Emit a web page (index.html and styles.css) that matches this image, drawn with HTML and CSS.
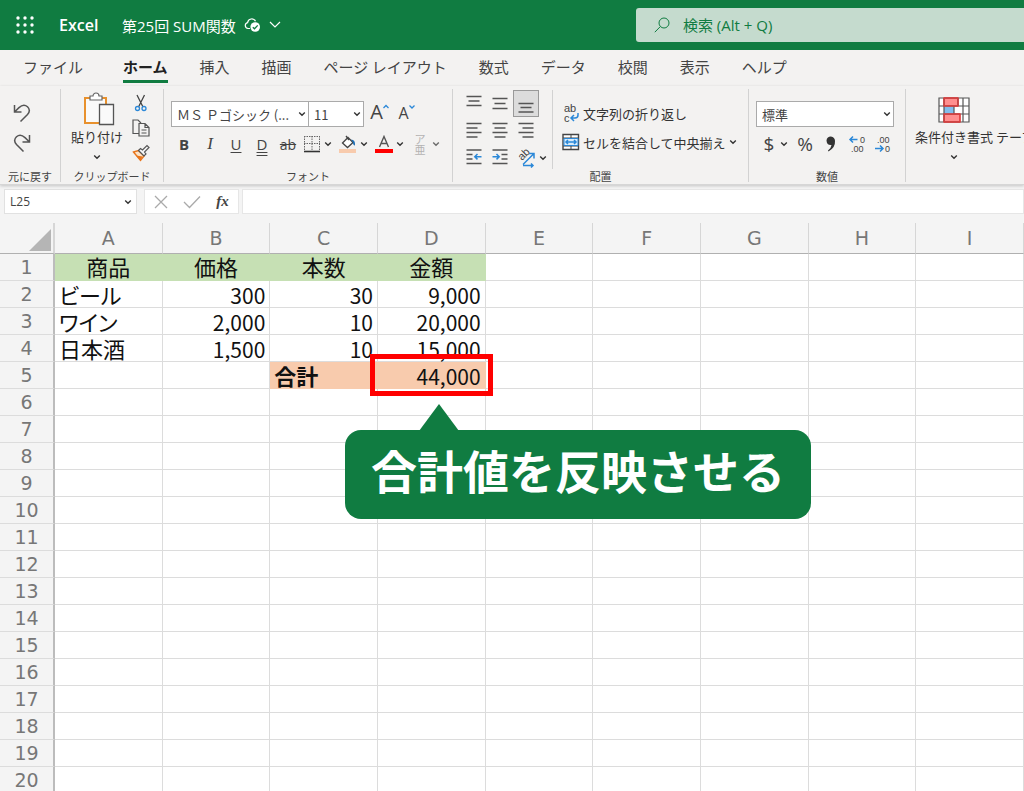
FILE: index.html
```html
<!DOCTYPE html>
<html lang="ja">
<head>
<meta charset="utf-8">
<title>第25回 SUM関数 - Excel</title>
<link rel="stylesheet" href="styles.css">
</head>
<body>
<svg class="defs" aria-hidden="true">
  <symbol id="chev" viewBox="0 0 8 8"><path d="M1.2 2.5 4 5.3 6.8 2.5" fill="none" stroke="#333" stroke-width="1.4"/></symbol>
</svg>
<header class="titlebar">
  <button class="launcher" aria-label="アプリ起動ツール">
    <svg width="18" height="18" viewBox="0 0 18 18" fill="#fff"><circle cx="2" cy="2" r="1.7"/><circle cx="9" cy="2" r="1.7"/><circle cx="16" cy="2" r="1.7"/><circle cx="2" cy="9" r="1.7"/><circle cx="9" cy="9" r="1.7"/><circle cx="16" cy="9" r="1.7"/><circle cx="2" cy="16" r="1.7"/><circle cx="9" cy="16" r="1.7"/><circle cx="16" cy="16" r="1.7"/></svg>
  </button>
  <a class="brand" href="#">Excel</a>
  <button class="doc">
    <span>第25回 SUM関数</span>
    <svg width="17" height="16" viewBox="0 0 17 16"><path d="M6 11.5H4A3 3 0 0 1 3.6 5.6 4.2 4.2 0 0 1 11.5 4.2" fill="none" stroke="#fff" stroke-width="1.2"/><circle cx="11.2" cy="10" r="4.8" fill="#fff"/><path d="m8.8 10.2 1.7 1.6 3.2-3.4" fill="none" stroke="#107c41" stroke-width="1.3"/></svg>
    <svg width="12" height="8" viewBox="0 0 12 8"><path d="m1 1 5 5 5-5" fill="none" stroke="#fff" stroke-width="1.2"/></svg>
  </button>
  <div class="search">
    <svg width="16" height="16" viewBox="0 0 16 16" fill="none" stroke="#107c41"><circle cx="10" cy="6" r="5"/><path d="M6.3 9.6.8 15.2"/></svg>
    <input type="text" placeholder="検索 (Alt + Q)" aria-label="検索">
  </div>
</header>
<nav class="tabs">
  <button class="tab file">ファイル</button>
  <button class="tab active">ホーム</button>
  <button class="tab">挿入</button>
  <button class="tab">描画</button>
  <button class="tab">ページ レイアウト</button>
  <button class="tab">数式</button>
  <button class="tab">データ</button>
  <button class="tab">校閲</button>
  <button class="tab">表示</button>
  <button class="tab">ヘルプ</button>
</nav>
<section class="ribbon">
  <div class="group g-undo">
    <div class="body stack">
      <button aria-label="元に戻す"><svg width="18" height="20" viewBox="0 0 18 20" fill="none" stroke="#555" stroke-width="1.5"><path d="M1.5 2v7h7M2 8.5 6 4.6C9 1.800 12 1.500 14.500 3.800 17 6.300 16.800 9 14.500 11.500L7.500 18.500"/></svg></button>
      <button aria-label="やり直し"><svg width="18" height="20" viewBox="0 0 18 20" fill="none" stroke="#555" stroke-width="1.5"><path d="M16.500 2v7h-7M16 8.500 12 4.600C9 1.800 6 1.500 3.500 3.800 1 6.300 1.200 9 3.500 11.500L10.500 18.500"/></svg></button>
    </div>
    <div class="label">元に戻す</div>
  </div>
  <div class="group g-clip">
    <div class="body clip">
      <button class="big">
        <svg class="board" width="32" height="34" viewBox="0 0 32 34"><path d="M2 6h21v25H2z" fill="#fafafa" stroke="#e8912d" stroke-width="2"/><path d="M7 8V4h3a3 3 0 0 1 6 0h3v4z" fill="#fff" stroke="#666" stroke-width="1.200"/><path d="M16.500 12.500h14v20h-14z" fill="#fafafa" stroke="#555" stroke-width="1.300"/></svg>
        <span>貼り付け</span>
        <svg class="chev"><use href="#chev"/></svg>
      </button>
      <div class="minis">
        <button aria-label="切り取り"><svg width="18" height="18" viewBox="0 0 18 18" fill="none"><path d="m5 1 6 12M12.500 1l-6 12" stroke="#444" stroke-width="1.300"/><circle cx="5.500" cy="14.500" r="2" stroke="#2b88d8" stroke-width="1.300"/><circle cx="12" cy="14.500" r="2" stroke="#2b88d8" stroke-width="1.300"/></svg></button>
        <button aria-label="コピー"><svg width="18" height="18" viewBox="0 0 18 18" fill="none" stroke="#555" stroke-width="1.200"><path d="M7 14.500H1V1h5l3 3"/><path d="M7 4.500h6l4 4V17H7zM13 4.500v4h4M9.500 11h5M9.500 14h5"/></svg></button>
        <button aria-label="書式のコピー"><svg width="18" height="18" viewBox="0 0 18 18"><path d="M1.500 8 6.500 6.500l5.500 5.500-3.500 4.500z" fill="#fbe3c8" stroke="#e8761d" stroke-width="1.400"/><path d="m4 11.500 6.500 1-2 4z" fill="#e8761d"/><path d="m6.500 6.500 2-2 2 1.500 4.500-4.500 2 2-4.500 4.500 1.500 2-2 2z" fill="#f6f6f6" stroke="#555" stroke-width="1.200"/></svg></button>
      </div>
    </div>
    <div class="label">クリップボード</div>
  </div>
  <div class="group g-font">
    <div class="body rows">
      <div class="line">
        <span class="combo name"><select aria-label="フォント"><option>ＭＳ Ｐゴシック (...</option></select><svg class="chev"><use href="#chev"/></svg></span>
        <span class="combo size"><select aria-label="フォント サイズ"><option>11</option></select><svg class="chev"><use href="#chev"/></svg></span>
        <button class="grow" aria-label="フォント サイズの拡大"><span class="a-big">A</span><svg width="6" height="16" viewBox="0 0 6 16"><path d="M.5 4 3 1.500 5.500 4" fill="none" stroke="#2b88d8" stroke-width="1.300"/></svg></button>
        <button class="grow" aria-label="フォント サイズの縮小"><span class="a-small">A</span><svg width="6" height="16" viewBox="0 0 6 16"><path d="M.5 1.500 3 4l2.500-2.500" fill="none" stroke="#2b88d8" stroke-width="1.300"/></svg></button>
      </div>
      <div class="line">
        <button class="t bold">B</button><button class="t ital">I</button><button class="t und">U</button><button class="t dbl">D</button><button class="t strike">ab</button>
        <button class="split" aria-label="罫線"><svg width="18" height="18" viewBox="0 0 18 18"><path d="M1.500 1v15M16.500 1v15M1 1.500h16M9 1v15M1 8.500h16" stroke="#666" stroke-dasharray="1.500 1"/><path d="M1 16.500h16" stroke="#333" stroke-width="1.600"/></svg><svg class="chev"><use href="#chev"/></svg></button>
        <button class="split" aria-label="塗りつぶしの色"><svg width="18" height="18" viewBox="0 0 18 18"><path d="M3.500 8 9 2.500 14 7.500 8.500 12.500zM7 1l3 4" fill="#fff" stroke="#444" stroke-width="1.300"/><path d="M12 4.500q4.500 0 4 6-2 0-2-3z" fill="#1f6fb5"/><path d="M0 14h17v4H0z" fill="#f8cbad"/></svg><svg class="chev"><use href="#chev"/></svg></button>
        <button class="split" aria-label="フォントの色"><svg width="18" height="18" viewBox="0 0 18 18"><path d="M4.500 12 9 1.500 13.500 12M6 8.500h6" fill="none" stroke="#555" stroke-width="1.400"/><path d="M0 14h18v4H0z" fill="red"/></svg><svg class="chev"><use href="#chev"/></svg></button>
        <button class="split off" aria-label="ふりがな"><span class="ruby"><span>ア</span><span>亜</span></span><svg class="chev"><use href="#chev"/></svg></button>
      </div>
    </div>
    <div class="label">フォント</div>
  </div>
  <div class="group g-align">
    <div class="body align">
      <div class="agrid">
        <button aria-label="上揃え"><svg width="16" height="18" viewBox="0 0 16 18"><path d="M.5 1.500h15M2.500 6h11M.5 10.500h15"/></svg></button>
        <button aria-label="上下中央揃え"><svg width="16" height="18" viewBox="0 0 16 18"><path d="M.5 3.500h15M2.500 8.500h11M.5 13.500h15"/></svg></button>
        <button class="on" aria-label="下揃え"><svg width="16" height="18" viewBox="0 0 16 18"><path d="M.5 8.500h15M2.500 12.500h11M.5 17h15"/></svg></button>
        <button aria-label="左揃え"><svg width="16" height="18" viewBox="0 0 16 18"><path d="M.5 1.500h15M.5 6h11M.5 10.500h15M.5 15h11"/></svg></button>
        <button aria-label="中央揃え"><svg width="16" height="18" viewBox="0 0 16 18"><path d="M.5 1.500h15M2.500 6h11M.5 10.500h15M2.500 15h11"/></svg></button>
        <button aria-label="右揃え"><svg width="16" height="18" viewBox="0 0 16 18"><path d="M.5 1.500h15M4.500 6h11M.5 10.500h15M4.500 15h11"/></svg></button>
        <button aria-label="インデントを減らす"><svg width="16" height="18" viewBox="0 0 16 18"><path d="M.5 1h15M.5 5.500h6M.5 10h6M.5 14.500h15"/><path class="blue" d="M15.500 7.700H9M11.500 5 8.800 7.700l2.700 2.700"/></svg></button>
        <button aria-label="インデントを増やす"><svg width="16" height="18" viewBox="0 0 16 18"><path d="M.5 1h15M9.500 5.500h6M9.500 10h6M.5 14.500h15"/><path class="blue" d="M.5 7.700H7M4.500 5l2.700 2.700-2.700 2.700"/></svg></button>
        <button class="orient" aria-label="方向"><svg width="18" height="20" viewBox="0 0 18 20"><text x="0" y="0" class="abtext" transform="translate(5 13) rotate(-45)">ab</text><path class="blue" d="M6 16.500 16.500 6M12 5.500h5v5M6 17.500h10M14 15.500l2 2-2 2"/></svg><svg class="chev"><use href="#chev"/></svg></button>
      </div>
      <div class="wraps">
        <button><svg width="18" height="20" viewBox="0 0 18 20"><text x="2" y="9" class="abtext">ab</text><text x="2" y="19" class="abtext">c</text><path class="blue" d="M16 10v2q0 3-3 3H9M12 12l-3 3 3 3"/></svg><span>文字列の折り返し</span></button>
        <button><svg width="18" height="18" viewBox="0 0 18 18"><path d="M1 1.500h15.500v15H1z" fill="#fff" stroke="#444" stroke-width="1.400"/><path d="M1 5h15.500M1 13h15.500M9 1.500V5M9 13v3.500" stroke="#444"/><path d="M2 5.500h14v7H2z" fill="#d9ecfa" stroke="#2b88d8"/><path class="blue" d="M4 9h10M6 7 4 9l2 2M12 7l2 2-2 2"/></svg><span>セルを結合して中央揃え</span><svg class="chev"><use href="#chev"/></svg></button>
      </div>
    </div>
    <div class="label">配置</div>
  </div>
  <div class="group g-num">
    <div class="body rows">
      <div class="line"><span class="combo fmt"><select aria-label="表示形式"><option>標準</option></select><svg class="chev"><use href="#chev"/></svg></span></div>
      <div class="line nums">
        <button class="cur">$<svg class="chev"><use href="#chev"/></svg></button>
        <button class="n">%</button>
        <button class="n" aria-label="桁区切りスタイル"><svg width="10" height="16" viewBox="0 0 10 16"><path d="M.5 4.500A4.200 4.200 0 0 1 9 5Q9.500 11.500 2.500 15.500L2 14.500Q5.300 12 5.500 9 .8 9.500.5 4.500z" fill="#333"/></svg></button>
        <button class="n" aria-label="小数点以下の表示桁数を増やす"><svg width="18" height="20" viewBox="0 0 18 20"><text x="12" y="9" class="dec">0</text><text x="3" y="18" class="dec">.00</text><path class="blue" d="M9.500 5.500H2M5 2.500l-3 3 3 3"/></svg></button>
        <button class="n" aria-label="小数点以下の表示桁数を減らす"><svg width="18" height="20" viewBox="0 0 18 20"><text x="3" y="9" class="dec">.00</text><text x="11" y="18" class="dec">0</text><path class="blue" d="M1 14.500h8M6 11.500l3 3-3 3"/></svg></button>
      </div>
    </div>
    <div class="label">数値</div>
  </div>
  <div class="group g-style">
    <div class="body styles">
      <button class="big">
        <svg width="32" height="26" viewBox="0 0 32 26"><path d="M1 1h30v24H1z" fill="#fff"/><path d="M6 1h14v8H6zM6 17h16v8H6z" fill="#ff8f8f" stroke="#e03c3c"/><path d="M6 9h10v8H6z" fill="#83beec"/><path d="M1 1h30v24H1zM6 1v24M25 1v24M1 9h30M1 17h30M20 1v8M16 9v8" fill="none" stroke="#555" stroke-width="1.200"/><path d="M6 1h14v8H6zM6 17h16v8H6z" fill="none" stroke="#e03c3c" stroke-width="1.300"/></svg>
        <span>条件付き書式</span>
        <svg class="chev"><use href="#chev"/></svg>
      </button>
      <button class="big tbl"><span>テーブルとして</span></button>
    </div>
  </div>
</section>
<section class="formula">
  <span class="combo cellname"><input type="text" value="L25" aria-label="名前ボックス"><svg class="chev"><use href="#chev"/></svg></span>
  <div class="fx">
    <button aria-label="キャンセル"><svg width="14" height="14" viewBox="0 0 14 14"><path d="m1 1 12 12M13 1 1 13" stroke="#aaa" stroke-width="1.300"/></svg></button>
    <button aria-label="入力"><svg width="18" height="14" viewBox="0 0 18 14"><path d="m1 7 5.500 5.500L17 1.500" fill="none" stroke="#aaa" stroke-width="1.300"/></svg></button>
    <button class="fn"><i>fx</i></button>
  </div>
  <input class="fin" type="text" aria-label="数式バー">
</section>
<main class="sheet">
<table>
<thead><tr><th class="corner" aria-label="すべて選択"><svg width="22" height="22" viewBox="0 0 22 22"><path d="M22 0v22H0z" fill="#b5b5b5"/></svg></th><th>A</th><th>B</th><th>C</th><th>D</th><th>E</th><th>F</th><th>G</th><th>H</th><th>I</th></tr></thead>
<tbody>
<tr><th>1</th><td class="head">商品</td><td class="head">価格</td><td class="head">本数</td><td class="head">金額</td><td></td><td></td><td></td><td></td><td></td></tr>
<tr><th>2</th><td>ビール</td><td class="num">300</td><td class="num">30</td><td class="num">9,000</td><td></td><td></td><td></td><td></td><td></td></tr>
<tr><th>3</th><td>ワイン</td><td class="num">2,000</td><td class="num">10</td><td class="num">20,000</td><td></td><td></td><td></td><td></td><td></td></tr>
<tr><th>4</th><td>日本酒</td><td class="num">1,500</td><td class="num">10</td><td class="num">15,000</td><td></td><td></td><td></td><td></td><td></td></tr>
<tr><th>5</th><td></td><td></td><td class="sum">合計</td><td class="num sum total">44,000<div class="mark"></div><div class="callout">合計値を反映させる</div></td><td></td><td></td><td></td><td></td><td></td></tr>
<tr><th>6</th><td></td><td></td><td></td><td></td><td></td><td></td><td></td><td></td><td></td></tr>
<tr><th>7</th><td></td><td></td><td></td><td></td><td></td><td></td><td></td><td></td><td></td></tr>
<tr><th>8</th><td></td><td></td><td></td><td></td><td></td><td></td><td></td><td></td><td></td></tr>
<tr><th>9</th><td></td><td></td><td></td><td></td><td></td><td></td><td></td><td></td><td></td></tr>
<tr><th>10</th><td></td><td></td><td></td><td></td><td></td><td></td><td></td><td></td><td></td></tr>
<tr><th>11</th><td></td><td></td><td></td><td></td><td></td><td></td><td></td><td></td><td></td></tr>
<tr><th>12</th><td></td><td></td><td></td><td></td><td></td><td></td><td></td><td></td><td></td></tr>
<tr><th>13</th><td></td><td></td><td></td><td></td><td></td><td></td><td></td><td></td><td></td></tr>
<tr><th>14</th><td></td><td></td><td></td><td></td><td></td><td></td><td></td><td></td><td></td></tr>
<tr><th>15</th><td></td><td></td><td></td><td></td><td></td><td></td><td></td><td></td><td></td></tr>
<tr><th>16</th><td></td><td></td><td></td><td></td><td></td><td></td><td></td><td></td><td></td></tr>
<tr><th>17</th><td></td><td></td><td></td><td></td><td></td><td></td><td></td><td></td><td></td></tr>
<tr><th>18</th><td></td><td></td><td></td><td></td><td></td><td></td><td></td><td></td><td></td></tr>
<tr><th>19</th><td></td><td></td><td></td><td></td><td></td><td></td><td></td><td></td><td></td></tr>
<tr><th>20</th><td></td><td></td><td></td><td></td><td></td><td></td><td></td><td></td><td></td></tr>
</tbody>
</table>
</main>
</body>
</html>
```
FILE: styles.css
```css
* { box-sizing: border-box; }
body {
  margin: 0; height: 100vh; overflow: hidden; display: flex; flex-direction: column;
  font-family: "Noto Sans CJK JP", sans-serif; font-size: 13px; color: #444; background: #f4f4f4;
}
button, input, select { font: inherit; color: inherit; margin: 0; padding: 0; border: 0; background: none; }
button { display: flex; align-items: center; justify-content: center; white-space: nowrap; }
svg { flex: none; display: block; }
.defs { position: absolute; width: 0; height: 0; }
.chev { width: 8px; height: 8px; }

.titlebar { flex: none; height: 50px; display: flex; align-items: center; background: #107c41; color: #fff; font-family: "Open Sans", "Noto Sans CJK JP", sans-serif; padding-left: 16px; }
.brand { margin-left: 25px; color: #fff; text-decoration: none; font-size: 16px; font-weight: 600; width: 63px; }
.doc { font-size: 15px; gap: 8px; }
.search { margin-left: auto; width: 38.5%; height: 34px; display: flex; align-items: center; gap: 13px; padding-left: 18px; background: #c5dbce; border-radius: 3px 0 0 3px; }
.search input { flex: 1; min-width: 0; font-size: 15px; outline: 0; }
.search input::placeholder { color: #107c41; opacity: 1; }

.tabs { flex: none; height: 36px; display: flex; background: #f3f2f1; padding-left: 7px; font-size: 15px; }
.tab { padding: 0 16px 4px; position: relative; color: #444; }
.file { margin-right: 8px; }
.active { font-weight: 700; color: #222; }
.active::after { content: ""; position: absolute; left: 16px; right: 16px; bottom: 3px; height: 3px; background: #107c41; }

.ribbon { flex: none; height: 99px; display: flex; background: #f3f2f1; padding-top: 3px; border-bottom: 1px solid #d6d6d6; box-shadow: 0 1px 3px #0003; position: relative; overflow: hidden; }
.group { flex: none; display: flex; flex-direction: column; border-right: 1px solid #d2d2d2; margin-bottom: 2px; }
.body { flex: 1; display: flex; min-height: 0; }
.label { height: 15px; line-height: 15px; font-size: 11px; text-align: center; white-space: nowrap; margin-bottom: -2px; }
.g-undo { width: 61px; }
.g-clip { width: 103px; }
.g-font { width: 289px; }
.g-align { width: 296px; }
.g-num { width: 157px; }
.g-style { flex: 1; border: 0; min-width: 0; overflow: hidden; }
.stack { flex-direction: column; gap: 10px; padding: 14px 0 0 13px; align-items: flex-start; }
.clip { padding-left: 10px; gap: 9px; }
.big { flex-direction: column; justify-content: flex-start; gap: 0; padding-top: 3px; color: #333; }
.big .board { margin-left: 4px; }
.big span { line-height: 20px; margin: 1px 0 6px; }
.minis { display: flex; flex-direction: column; gap: 7px; padding-top: 5px; }
.rows { flex-direction: column; gap: 4px; padding: 12px 0 0 7px; }
.line { display: flex; height: 26px; align-items: center; }
.combo { position: relative; display: block; flex: none; height: 26px; background: #fff; border: 1px solid #aaa; }
.combo select, .combo input { display: block; width: 100%; height: 100%; appearance: none; padding-left: 5px; outline: 0; color: #444; }
.combo .chev { position: absolute; right: 2px; top: 8px; pointer-events: none; }
.name { width: 138px; }
.size { width: 55px; border-left: 0; }
.fmt { width: 138px; }
.grow { width: 27px; height: 26px; align-items: flex-start; font-family: "Open Sans", sans-serif; padding-left: 4px; }
.grow svg { margin-top: 3px; }
.a-big { font-size: 20px; line-height: 22px; }
.a-small { font-size: 16px; line-height: 25px; }
.t { width: 26px; height: 26px; font-family: "Open Sans", sans-serif; font-size: 15px; }
.bold { font-weight: 700; }
.ital { font-style: italic; font-family: "Liberation Serif", serif; font-size: 17px; }
.und { text-decoration: underline; text-underline-offset: 2px; }
.dbl { text-decoration: underline double; text-underline-offset: 2px; }
.strike { text-decoration: line-through; font-size: 14px; }
.split { width: 36px; height: 26px; justify-content: flex-start; gap: 3px; padding-left: 2px; }
.off { color: #999; opacity: .7; }
.ruby { width: 18px; display: flex; flex-direction: column; align-items: center; font-size: 11px; line-height: 10px; }
.align { padding-left: 8px; }
.agrid { display: grid; grid-template-columns: repeat(3, 26px); grid-auto-rows: 27px; width: 92px; margin: 1px 0 0; border-right: 1px solid #d2d2d2; height: 79px; }
.agrid path { stroke: #555; stroke-width: 1.3; fill: none; }
.blue, .agrid .blue { stroke: #2b88d8; stroke-width: 1.5; fill: none; }
.on { background: #dcdcdc; border: 1px solid #999; }
.orient { justify-content: flex-start; gap: 4px; padding-left: 4px; }
.abtext { font: 11px "Liberation Sans", sans-serif; fill: #444; }
.dec { font: 9px "Liberation Sans", sans-serif; fill: #444; }
.wraps { display: flex; flex-direction: column; gap: 3px; padding: 11px 0 0 9px; align-items: flex-start; }
.wraps button { height: 26px; gap: 3px; color: #333; }
.nums { font-family: "Open Sans", sans-serif; font-size: 19px; }
.cur { width: 36px; gap: 6px; padding-left: 4px; }
.n { width: 26px; height: 26px; }
.styles { padding-left: 9px; gap: 3px; }
.styles .big { padding-top: 8px; }
.styles .big span { margin: 4px 0 6px; }
.styles .tbl { padding-top: 34px; }

.formula { flex: none; height: 33px; display: flex; padding: 4px 0 4px 4px; }
.cellname { width: 133px; height: 25px; border-color: #e1e1e1; margin-right: 7px; font-family: "Open Sans", sans-serif; font-size: 12px; }
.cellname .chev { right: 4px; }
.fx { display: flex; width: 95px; background: #fff; border: 1px solid #e6e6e6; margin-right: 3px; }
.fx button { flex: 1; }
.fn { font: bold 15px "Liberation Serif", serif; color: #444; }
.fin { flex: 1; min-width: 0; background: #fff; border: 1px solid #e6e6e6; outline: 0; }

.sheet { flex: 1; min-height: 0; overflow: hidden; padding-top: 5px; }
table { width: 100%; table-layout: fixed; border-collapse: separate; border-spacing: 0; }
th { font-family: "DejaVu Sans", sans-serif; font-weight: 400; font-size: 19px; color: #777; padding: 0; line-height: 26px; height: 27px; border-bottom: 1px solid #dcdcdc; border-right: 2px solid #bcbcbc; }
thead th { height: 31px; border-right: 1px solid #d6d6d6; border-bottom: 1px solid #b0b0b0; }
thead th.corner { width: 55px; border-right: 2px solid #d6d6d6; }
.corner svg { margin: 3px 2px 0 auto; }
td { height: 27px; padding: 1px 4px 1px 4px; line-height: 24px; font-size: 22px; font-feature-settings: "palt"; color: #111; background: #fff; border-right: 1px solid #dcdcdc; border-bottom: 1px solid #dcdcdc; white-space: nowrap; }
.head { text-align: center; background: #c6e0b4; border-color: #c6e0b4; padding: 0 4px 2px; }
.num { text-align: right; font-size: 21px; padding: 2px 4px 0; }
.sum { background: #f8cbad; border-color: #f8cbad; font-weight: 700; }
.total { position: relative; font-weight: 400; }
.mark { position: absolute; inset: -8px; border: 5px solid #f00; }
.callout { position: absolute; left: -33px; top: 68px; height: 89px; line-height: 78px; padding: 0 26px; border-radius: 16px; background: #107c41; color: #fff; font-size: 46px; font-weight: 700; font-feature-settings: normal; }
.callout::before { content: ""; position: absolute; left: 74px; top: -26px; border: 20px solid transparent; border-top: 0; border-bottom: 27px solid #107c41; }
```
